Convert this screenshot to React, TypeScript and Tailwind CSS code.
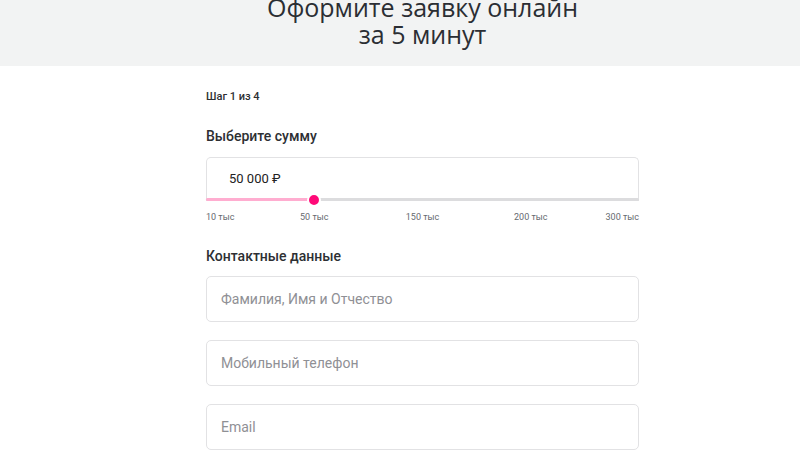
import React from "react";

const labels = ["10 тыс", "50 тыс", "150 тыс", "200 тыс", "300 тыс"];

function Field({ placeholder }: { placeholder: string }) {
  return (
    <div className="h-[46px] w-full rounded-[5px] border border-[#e2e2e4] flex items-center pl-[14px] text-[14px] text-[#8f9095]">
      {placeholder}
    </div>
  );
}

export default function App() {
  return (
    <div className="w-[800px] h-[462px] overflow-hidden bg-white" style={{ fontFamily: "Roboto, 'Liberation Sans', sans-serif" }}>
      <div className="h-[66px] bg-[#f2f3f3] overflow-hidden">
        <h1
          className="ml-[206px] w-[433px] mt-[-6px] text-[25px] leading-[27px] text-[#2b2e33] text-center font-medium"
          style={{ fontFamily: "'Open Sans', 'Noto Sans', sans-serif" }}
        >
          Оформите заявку онлайн
          <br />
          за 5 минут
        </h1>
      </div>

      <div className="ml-[206px] w-[433px]">
        <div className="mt-[24px] text-[11px] leading-[14px] font-medium text-[#2d2f33]">Шаг 1 из 4</div>
        <div className="mt-[24px] text-[14px] leading-[16px] font-medium text-[#2d2f33]">Выберите сумму</div>

        <div className="mt-[13px] relative h-[44px] rounded-t-[5px] border border-b-0 border-[#e2e2e4] flex items-center pl-[22px] pb-[2px] text-[13px] text-[#222]">
          50 000 ₽
          <div className="absolute left-[-1px] right-[-1px] bottom-0 h-[3px] bg-[#dcdcde] rounded-full">
            <div className="h-full w-[25%] bg-[#ffadd0] rounded-l-full" />
            <div className="absolute left-[25%] top-1/2 -translate-x-1/2 -translate-y-1/2 w-[14px] h-[14px] rounded-full bg-[#ff0a78] border-[2px] border-white" />
          </div>
        </div>

        <div className="mt-[11px] flex justify-between text-[9px] leading-[11px] text-[#666a70]">
          {labels.map((l, i) => (
            <div
              key={l}
              className={
                "w-0 flex whitespace-nowrap " +
                (i === 0 ? "justify-start" : i === labels.length - 1 ? "justify-end" : "justify-center")
              }
            >
              {l}
            </div>
          ))}
        </div>

        <div className="mt-[25px] text-[14px] leading-[16px] font-medium text-[#2d2f33]">Контактные данные</div>

        <div className="mt-[12px] flex flex-col gap-[18px]">
          <Field placeholder="Фамилия, Имя и Отчество" />
          <Field placeholder="Мобильный телефон" />
          <Field placeholder="Email" />
        </div>
      </div>
    </div>
  );
}
